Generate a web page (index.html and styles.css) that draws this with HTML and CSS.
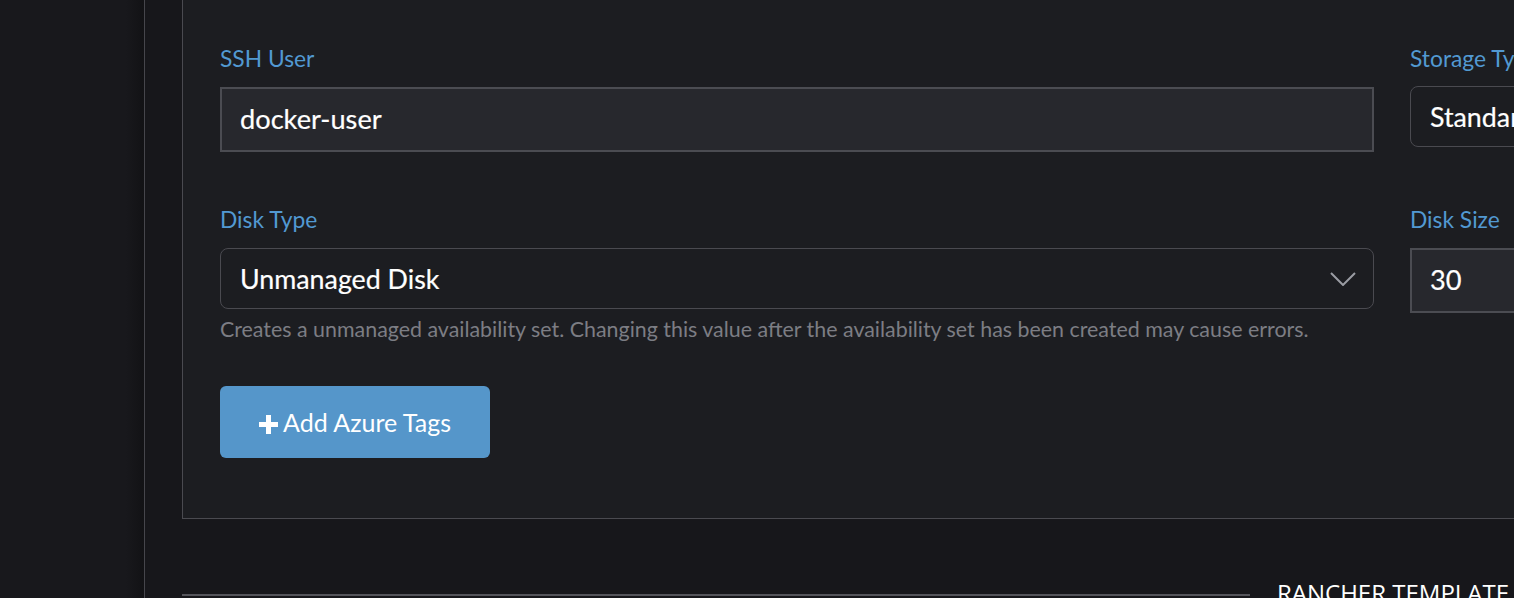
FILE: index.html
```html
<!DOCTYPE html>
<html>
<head>
<meta charset="utf-8">
<link rel="stylesheet" href="styles.css">
</head>
<body>
<div class="app">
  <aside class="sidebar"></aside>
  <main class="main">
    <section class="card">
      <div class="row">
        <div class="col-main">
          <label class="label">SSH User</label>
          <div class="input">docker-user</div>
        </div>
        <div class="col-side">
          <label class="label">Storage Type</label>
          <div class="select select-side">Standard_LRS</div>
        </div>
      </div>
      <div class="row row-2">
        <div class="col-main">
          <label class="label">Disk Type</label>
          <div class="select">
            <span>Unmanaged Disk</span>
            <svg class="chev" width="26" height="14" viewBox="0 0 26 14"><path d="M1 1 L13 13 L25 1" fill="none" stroke="#9a9ca3" stroke-width="2"/></svg>
          </div>
          <p class="help">Creates a unmanaged availability set. Changing this value after the availability set has been created may cause errors.</p>
        </div>
        <div class="col-side">
          <label class="label">Disk Size</label>
          <div class="input">30</div>
        </div>
      </div>
      <button class="btn"><span class="plus"></span>Add Azure Tags</button>
    </section>
    <div class="section-head">
      <div class="rule"></div>
      <h2 class="title">RANCHER TEMPLATE</h2>
    </div>
  </main>
</div>
</body>
</html>
```
FILE: styles.css
```css
html, body {
  margin: 0;
  padding: 0;
  width: 1514px;
  height: 598px;
  overflow: hidden;
  background: #17171b;
  font-family: Lato, "Open Sans", sans-serif;
}
.app {
  display: flex;
  height: 598px;
}
.sidebar {
  width: 144px;
  flex: none;
  background: linear-gradient(to right, #18181c 0, #18181c 126px, #121215 144px);
  border-right: 1px solid #46464c;
}
.main {
  flex: 1;
  min-width: 0;
  padding-left: 37px;
  display: flex;
  flex-direction: column;
}
.card {
  margin-top: -20px;
  width: 1400px;
  flex: none;
  box-sizing: border-box;
  background: #1c1d21;
  border: 1px solid #4a4a50;
  padding: 63px 0 60px 37px;
}
.row {
  display: flex;
  gap: 36px;
}
.row-2 {
  margin-top: 53px;
}
.col-main {
  width: 1154px;
  flex: none;
}
.col-side {
  width: 300px;
  flex: none;
}
.label {
  display: block;
  color: #5299d2;
  font-size: 22.8px;
  line-height: 28px;
  margin-bottom: 15px;
}
.input {
  box-sizing: border-box;
  height: 65px;
  background: #27282d;
  border: 2px solid #4b4c52;
  color: #ffffff;
  font-size: 27.2px;
  line-height: 60px;
  padding-left: 18px;
  white-space: nowrap;
  -webkit-text-stroke: 0.2px #ffffff;
}
.col-side .input { margin-top: 1px; }
.select {
  box-sizing: border-box;
  height: 61px;
  background: #1c1d21;
  border: 1px solid #4a4a50;
  border-radius: 8px;
  color: #ffffff;
  font-size: 26.8px;
  padding: 0 17px 0 19px;
  display: flex;
  align-items: center;
  justify-content: space-between;
  white-space: nowrap;
  -webkit-text-stroke: 0.2px #ffffff;
}
.select-side { margin-top: -1px; }
.chev { display: block; }
.help {
  margin: 6px 0 0;
  color: #7c7d84;
  font-size: 21.4px;
  line-height: 28px;
  white-space: nowrap;
}
.btn {
  margin-top: 43px;
  width: 270px;
  height: 72px;
  border: none;
  border-radius: 6px;
  background: #5596ca;
  color: #ffffff;
  font-family: Lato, sans-serif;
  font-size: 25px;
  display: flex;
  align-items: center;
  justify-content: center;
  padding: 0;
}
.plus {
  position: relative;
  width: 19px;
  height: 19px;
  margin-right: 5px;
  margin-top: 4px;
}
.plus::before, .plus::after {
  content: "";
  position: absolute;
  background: #ffffff;
}
.plus::before { left: 7px; top: 0; width: 5px; height: 19px; }
.plus::after { left: 0; top: 7px; width: 19px; height: 5px; }
.section-head {
  display: flex;
  align-items: center;
  height: 30px;
  margin-top: 61px;
  gap: 27px;
  flex: none;
}
.rule {
  width: 1068px;
  height: 2px;
  background: #55555b;
  flex: none;
}
.title {
  margin: 0;
  color: #ffffff;
  font-family: "Open Sans", sans-serif;
  font-weight: 500;
  font-size: 24px;
  line-height: 30px;
  white-space: nowrap;
  position: relative;
  top: -2px;
}
```
